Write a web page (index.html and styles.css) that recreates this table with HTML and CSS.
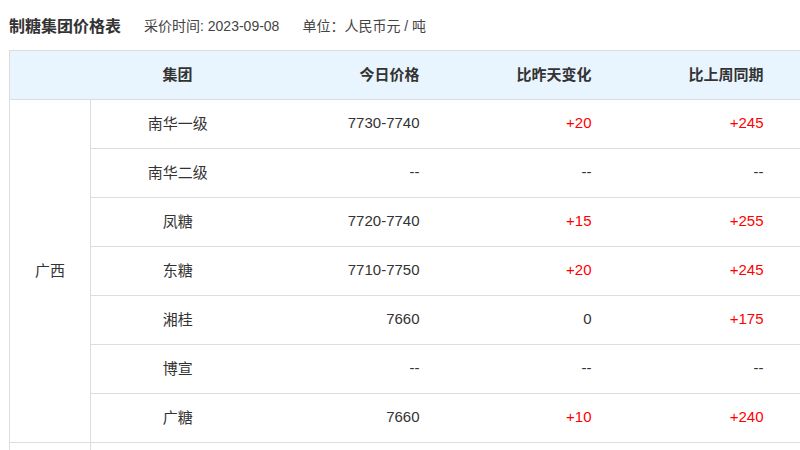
FILE: index.html
```html
<!DOCTYPE html>
<html lang="zh">
<head>
<meta charset="utf-8">
<title>制糖集团价格表</title>
<link rel="stylesheet" href="styles.css">
</head>
<body>
<div class="page">
  <div class="head">
    <h1 class="title">制糖集团价格表</h1>
    <span class="meta">采价时间: 2023-09-08</span>
    <span class="meta">单位：人民币元 / 吨</span>
  </div>
  <table class="grid">
    <colgroup>
      <col class="c-region">
      <col class="c-group">
      <col class="c-num">
      <col class="c-num">
      <col class="c-num">
      <col class="c-rest">
    </colgroup>
    <thead>
      <tr>
        <th></th>
        <th class="center">集团</th>
        <th class="right">今日价格</th>
        <th class="right">比昨天变化</th>
        <th class="right">比上周同期</th>
        <th></th>
      </tr>
    </thead>
    <tbody>
      <tr>
        <td class="center region" rowspan="7">广西</td>
        <td class="center">南华一级</td>
        <td class="right">7730-7740</td>
        <td class="right up">+20</td>
        <td class="right up">+245</td>
        <td></td>
      </tr>
      <tr>
        <td class="center">南华二级</td>
        <td class="right">--</td>
        <td class="right">--</td>
        <td class="right">--</td>
        <td></td>
      </tr>
      <tr>
        <td class="center">凤糖</td>
        <td class="right">7720-7740</td>
        <td class="right up">+15</td>
        <td class="right up">+255</td>
        <td></td>
      </tr>
      <tr>
        <td class="center">东糖</td>
        <td class="right">7710-7750</td>
        <td class="right up">+20</td>
        <td class="right up">+245</td>
        <td></td>
      </tr>
      <tr>
        <td class="center">湘桂</td>
        <td class="right">7660</td>
        <td class="right">0</td>
        <td class="right up">+175</td>
        <td></td>
      </tr>
      <tr>
        <td class="center">博宣</td>
        <td class="right">--</td>
        <td class="right">--</td>
        <td class="right">--</td>
        <td></td>
      </tr>
      <tr>
        <td class="center">广糖</td>
        <td class="right">7660</td>
        <td class="right up">+10</td>
        <td class="right up">+240</td>
        <td></td>
      </tr>
      <tr>
        <td class="center region"></td>
        <td class="center"></td>
        <td class="right"></td>
        <td class="right"></td>
        <td class="right"></td>
        <td></td>
      </tr>
    </tbody>
  </table>
</div>
</body>
</html>
```

FILE: styles.css
```css
html, body {
  margin: 0;
  padding: 0;
  background: #fff;
}

body {
  width: 800px;
  height: 450px;
  overflow: hidden;
  font-family: "Liberation Sans", "Noto Sans CJK SC", Arial, sans-serif;
  color: #333;
}

.page {
  padding-left: 9px;
}

.head {
  display: flex;
  align-items: center;
  height: 50px;
  gap: 23px;
}

.title {
  margin: 0;
  font-size: 16px;
  font-weight: bold;
  color: #333;
  font-family: "Noto Sans CJK SC", "Liberation Sans", sans-serif;
}

.meta {
  font-size: 14px;
  color: #444;
}

.grid {
  border-collapse: collapse;
  table-layout: fixed;
  width: 1000px;
  font-size: 15px;
}

.c-region { width: 81px; }
.c-group { width: 174px; }
.c-num { width: 172px; }
.c-rest { width: 229px; }

.grid th,
.grid td {
  height: 45px;
  padding: 0 17px 3px 0;
  border-top: 1px solid #ddd;
  border-bottom: 1px solid #ddd;
  white-space: nowrap;
}

.grid th {
  background: #e9f5fe;
  font-weight: bold;
  color: #333;
  font-family: "Noto Sans CJK SC", "Liberation Sans", sans-serif;
}

.grid thead th:first-child {
  border-left: 1px solid #ddd;
}

.grid td.region {
  border-left: 1px solid #ddd;
  border-right: 1px solid #ddd;
}

.center {
  text-align: center;
  padding-right: 0 !important;
}

.right {
  text-align: right;
}

.up {
  color: #ff0000;
}
```
